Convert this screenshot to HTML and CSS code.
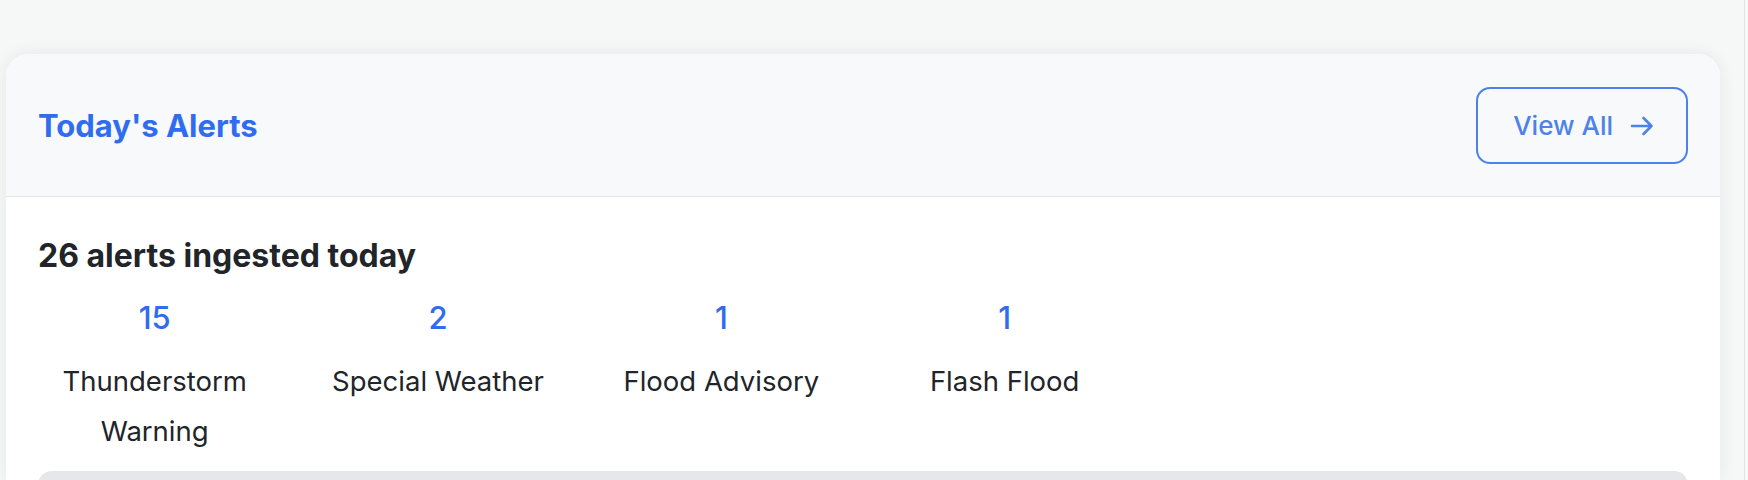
FILE: index.html
```html
<!DOCTYPE html>
<html lang="en">
<head>
<meta charset="utf-8">
<title>Today's Alerts</title>
<link rel="stylesheet" href="styles.css">
</head>
<body>
<div class="page">
  <main class="main">
    <section class="card">
      <header class="card-header">
        <h2 class="card-title">Today's Alerts</h2>
        <a class="btn-outline" href="#">
          <span>View All</span>
          <svg class="arrow" width="24" height="20" viewBox="0 0 24 20" aria-hidden="true">
            <path d="M2 10 H21.5 M13.5 2 L21.5 10 L13.5 18" fill="none" stroke="currentColor" stroke-width="2.6" stroke-linecap="round" stroke-linejoin="round"/>
          </svg>
        </a>
      </header>
      <div class="card-body">
        <h3 class="summary">26 alerts ingested today</h3>
        <div class="stats">
          <div class="stat"><div class="stat-num">15</div><div class="stat-label">Thunderstorm Warning</div></div>
          <div class="stat"><div class="stat-num">2</div><div class="stat-label">Special Weather</div></div>
          <div class="stat"><div class="stat-num">1</div><div class="stat-label">Flood Advisory</div></div>
          <div class="stat"><div class="stat-num">1</div><div class="stat-label">Flash Flood</div></div>
        </div>
        <div class="chart-box"></div>
      </div>
    </section>
  </main>
  <div class="side-strip"></div>
</div>
</body>
</html>
```
FILE: styles.css
```css
html, body {
  margin: 0;
  padding: 0;
  height: 100%;
  overflow: hidden;
}
body {
  background: #f6f7f7;
  font-family: Inter, "Liberation Sans", sans-serif;
  color: #212529;
}
.page {
  display: flex;
  height: 100%;
}
.main {
  flex: 1;
  padding: 54px 24px 0 6px;
}
.side-strip {
  width: 3px;
  border-left: 1px solid #e3e5e5;
  background: #f7f8f8;
}
.card {
  background: #ffffff;
  border-radius: 22px 22px 0 0;
  box-shadow: 0 0 18px rgba(0, 0, 0, 0.07);
  overflow: hidden;
  height: 100%;
}
.card-header {
  display: flex;
  align-items: center;
  justify-content: space-between;
  padding: 33px 32px 32px 32px;
  background: #f8f9fb;
  border-bottom: 1px solid #e3e5e8;
}
.card-title {
  margin: 0;
  font-size: 31px;
  font-weight: 700;
  line-height: 38px;
  color: #2f6cef;
}
.btn-outline {
  display: flex;
  align-items: center;
  gap: 17px;
  box-sizing: border-box;
  height: 77px;
  padding: 0 32px 0 35px;
  border: 2px solid #4d82ea;
  border-radius: 14px;
  color: #4d82ea;
  text-decoration: none;
  font-size: 26px;
  font-weight: 500;
}
.arrow {
  display: block;
}
.card-body {
  padding: 42px 32px 0 32px;
}
.summary {
  margin: 0 0 28px 0;
  font-size: 32px;
  font-weight: 700;
  line-height: 34px;
  color: #212529;
}
.stats {
  display: grid;
  grid-template-columns: repeat(6, 1fr);
  column-gap: 50px;
  margin-bottom: 15px;
}
.stat {
  text-align: center;
}
.stat-num {
  font-size: 31px;
  font-weight: 500;
  line-height: 34px;
  color: #2f6cef;
}
.stat-label {
  margin-top: 21px;
  font-size: 27.5px;
  line-height: 50px;
  color: #212529;
}
.chart-box {
  height: 200px;
  background: #e5e7eb;
  border-radius: 14px 14px 0 0;
}
```
